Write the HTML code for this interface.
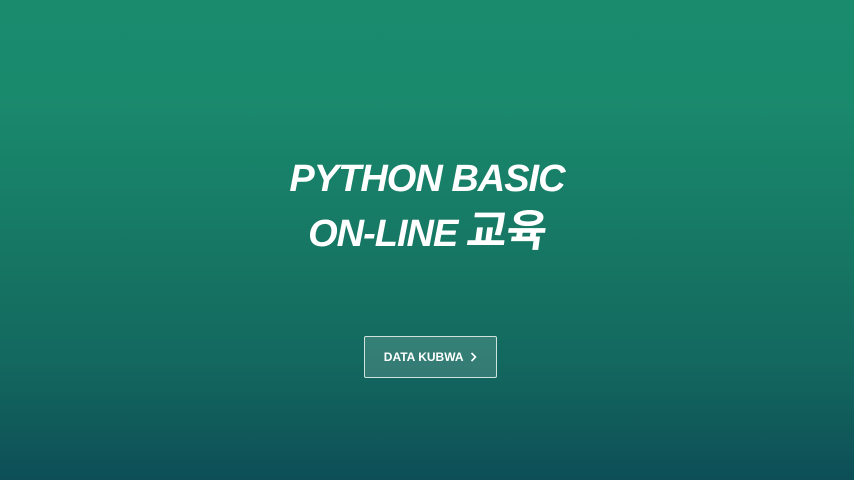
<!DOCTYPE html>
<html><head><meta charset="utf-8"><style>
html,body{margin:0;padding:0;}
body{width:854px;height:480px;overflow:hidden;position:relative;
background:linear-gradient(to bottom,#1b8b6e 0%,#1a8a6d 20%,#167563 55%,#13685f 75%,#0f5659 93%,#0d4e57 100%);
font-family:"Liberation Sans","Noto Sans CJK KR",sans-serif;}
.t{position:absolute;left:0;width:854px;text-align:center;color:#fff;font-weight:bold;font-style:italic;font-size:38px;letter-spacing:-1px;line-height:46px;}
.k{font-size:44px;font-style:normal;display:inline-block;transform:skewX(-8deg);}
.btn{position:absolute;left:364px;top:336px;width:131px;height:40px;border:1px solid #cfe3dc;border-radius:2px;background:rgba(255,255,255,0.14);color:#fff;font-weight:bold;font-size:12px;line-height:40px;text-align:center;box-sizing:content-box;}
</style></head><body>
<div class="t" style="top:156px;">PYTHON BASIC</div>
<div class="t" style="top:209px;">ON-LINE <span class="k">교육</span></div>
<div class="btn">DATA KUBWA&nbsp;&nbsp;<svg width="7" height="10" viewBox="0 0 7 10" style="vertical-align:-1px"><path d="M1.5 1 L5.5 5 L1.5 9" stroke="#fff" stroke-width="1.6" fill="none"/></svg></div>
</body></html>
